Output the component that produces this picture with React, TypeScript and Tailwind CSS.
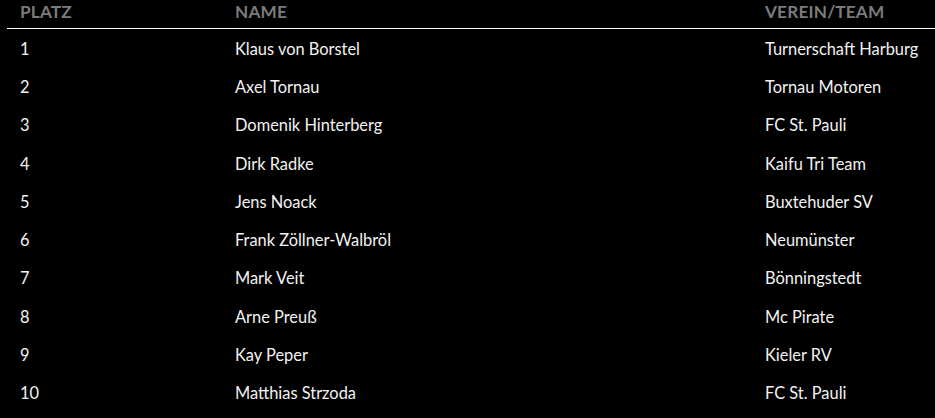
const results = [
  { place: "1", name: "Klaus von Borstel", team: "Turnerschaft Harburg" },
  { place: "2", name: "Axel Tornau", team: "Tornau Motoren" },
  { place: "3", name: "Domenik Hinterberg", team: "FC St. Pauli" },
  { place: "4", name: "Dirk Radke", team: "Kaifu Tri Team" },
  { place: "5", name: "Jens Noack", team: "Buxtehuder SV" },
  { place: "6", name: "Frank Zöllner-Walbröl", team: "Neumünster" },
  { place: "7", name: "Mark Veit", team: "Bönningstedt" },
  { place: "8", name: "Arne Preuß", team: "Mc Pirate" },
  { place: "9", name: "Kay Peper", team: "Kieler RV" },
  { place: "10", name: "Matthias Strzoda", team: "FC St. Pauli" },
];

export default function App() {
  return (
    <main className="h-[418px] w-[935px] overflow-hidden bg-black font-['Lato',sans-serif] text-[16.4px] text-[#f2f2f2]">
      <div className="ml-[7px] w-[1000px]">
        <div className="grid h-[29px] grid-cols-[215px_530px_255px] border-b border-white text-[17.2px] font-bold uppercase tracking-[0.01em] text-[#7b7b7b]">
          <div className="px-[13px] leading-[23px]">Platz</div>
          <div className="px-[13px] leading-[23px]">Name</div>
          <div className="px-[13px] leading-[23px]">Verein/Team</div>
        </div>
        {results.map((row) => (
          <div key={row.place} className="grid h-[38.25px] grid-cols-[215px_530px_255px] items-center pt-[2px]">
            <div className="px-[13px]">{row.place}</div>
            <div className="px-[13px]">{row.name}</div>
            <div className="px-[13px]">{row.team}</div>
          </div>
        ))}
      </div>
    </main>
  );
}
